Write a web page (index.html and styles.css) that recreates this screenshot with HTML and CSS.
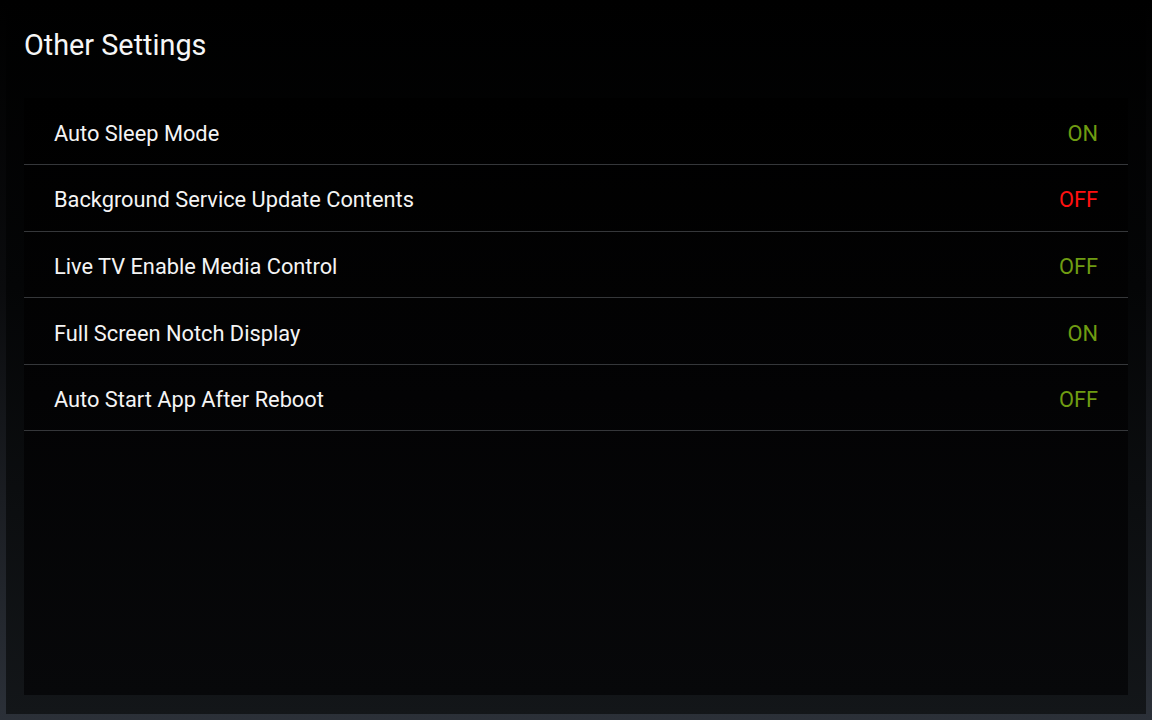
FILE: index.html
```html
<!DOCTYPE html>
<html>
<head>
<meta charset="utf-8">
<link rel="stylesheet" href="styles.css">
</head>
<body>
<div class="frame">
  <h1 class="title">Other Settings</h1>
  <div class="panel">
    <div class="row"><span class="label">Auto Sleep Mode</span><span class="value on">ON</span></div>
    <div class="row"><span class="label">Background Service Update Contents</span><span class="value off-red">OFF</span></div>
    <div class="row"><span class="label">Live TV Enable Media Control</span><span class="value on">OFF</span></div>
    <div class="row"><span class="label">Full Screen Notch Display</span><span class="value on">ON</span></div>
    <div class="row"><span class="label">Auto Start App After Reboot</span><span class="value on">OFF</span></div>
  </div>
</div>
</body>
</html>
```
FILE: styles.css
```css
html, body {
  margin: 0;
  padding: 0;
  height: 720px;
  overflow: hidden;
}
body {
  background: linear-gradient(to bottom, #000000 0%, #0a0b0d 40%, #2b3038 100%);
  font-family: Roboto, "Liberation Sans", sans-serif;
  color: #ffffff;
}
.frame {
  margin: 0 6px;
  height: 714px;
  box-sizing: border-box;
  padding: 0 18px 19px 18px;
  background: linear-gradient(to bottom, #000000 0%, #040506 40%, #131619 100%);
  display: flex;
  flex-direction: column;
}
.title {
  margin: 0;
  padding: 29.5px 0 0 0;
  height: 98px;
  box-sizing: border-box;
  font-size: 28.8px;
  line-height: 30px;
  font-weight: 400;
  color: #f6f6f6;
}
.panel {
  flex: 1;
  background: linear-gradient(to bottom, #000000 0%, #030304 50%, #07080a 100%);
  padding-top: 0.5px;
}
.row {
  height: 65.6px;
  border-bottom: 1px solid #35373a;
  display: flex;
  align-items: center;
  justify-content: space-between;
  padding: 0 30px;
  font-size: 21.8px;
}
.label {
  color: #f4f4f4;
  padding-top: 4px;
}
.value {
  padding-top: 4px;
}
.value.on {
  color: #6f9c12;
}
.value.off-red {
  color: #ff1010;
}
```
